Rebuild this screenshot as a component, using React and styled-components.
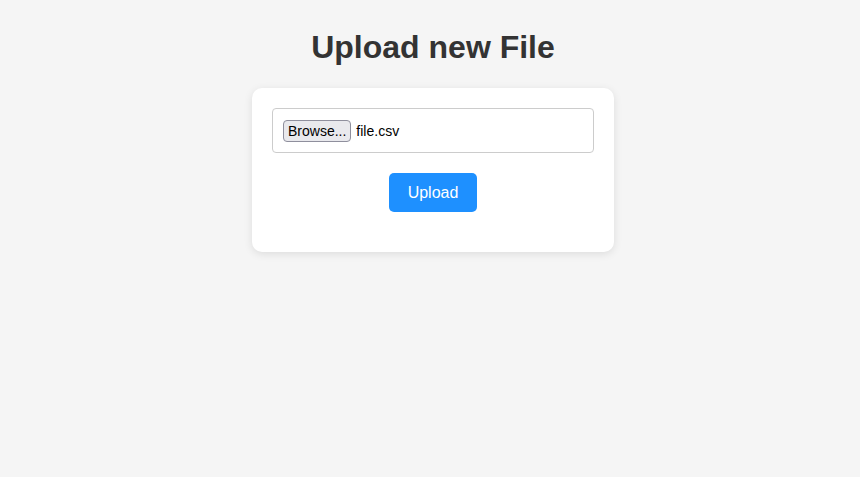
import styled, { createGlobalStyle } from 'styled-components';

const GlobalStyle = createGlobalStyle`
  html, body {
    margin: 0;
    padding: 0;
    background: #f5f5f5;
    font-family: "Liberation Sans", Arial, sans-serif;
  }
`;

const Page = styled.div`
  min-height: 477px;
  padding: 29px 0 0 6px;
  box-sizing: border-box;
  display: flex;
  flex-direction: column;
  align-items: center;
`;

const Title = styled.h1`
  margin: 0 0 22px;
  font-size: 32px;
  font-weight: bold;
  color: #333;
  line-height: 37px;
`;

const Card = styled.form`
  width: 362px;
  box-sizing: border-box;
  background: #fff;
  border-radius: 10px;
  padding: 20px 20px 40px;
  box-shadow: 0 2px 8px rgba(0, 0, 0, 0.1);
  display: flex;
  flex-direction: column;
  align-items: center;
  gap: 20px;
`;

const FileField = styled.label`
  width: 100%;
  box-sizing: border-box;
  height: 45px;
  border: 1px solid #ccc;
  border-radius: 4px;
  padding: 0 10px;
  display: flex;
  align-items: center;
  gap: 5px;
  font-size: 14px;
  color: #000;
  cursor: pointer;
`;

const BrowseButton = styled.span`
  height: 22px;
  box-sizing: border-box;
  padding: 0 4px;
  display: flex;
  align-items: center;
  background: #e9e9ed;
  border: 1px solid #8f8f9d;
  border-radius: 4px;
  color: #000;
`;

const FileName = styled.span`
  color: #000;
`;

const UploadButton = styled.button`
  width: 88px;
  height: 39px;
  padding: 1px 0 0;
  border: none;
  border-radius: 5px;
  background: #1e90ff;
  color: #fff;
  font-family: "Liberation Sans", Arial, sans-serif;
  font-size: 16px;
  cursor: pointer;
`;

export default function App() {
  return (
    <>
      <GlobalStyle />
      <Page>
        <Title>Upload new File</Title>
        <Card onSubmit={(e) => e.preventDefault()}>
          <FileField>
            <BrowseButton>Browse...</BrowseButton>
            <FileName>file.csv</FileName>
          </FileField>
          <UploadButton type="submit">Upload</UploadButton>
        </Card>
      </Page>
    </>
  );
}
